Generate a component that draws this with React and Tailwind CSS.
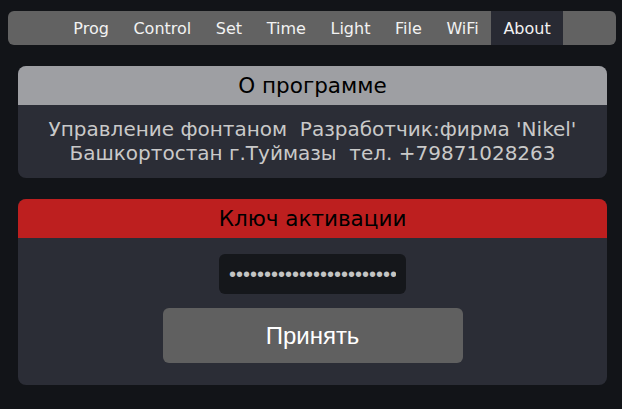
import React from 'react'

const tabs = ['Prog', 'Control', 'Set', 'Time', 'Light', 'File', 'WiFi', 'About']

const Card = ({ title, head, children }) => (
  <div className="rounded-lg overflow-hidden bg-[#2b2d36]">
    <div className={`${head} text-black text-center text-[21.5px] leading-[25px] py-[7px]`}>{title}</div>
    {children}
  </div>
)

const App = () => {
  return (
    <div className="min-h-[409px] bg-[#121418] pt-[11px] font-['DejaVu_Sans',sans-serif]">
      <nav className="ml-2 mr-[6px] h-[34px] rounded-md bg-[#626262] flex justify-center">
        {tabs.map((t) => (
          <a
            key={t}
            className={`px-[12.3px] pt-px flex items-center text-[16px] text-[#f2f2f2] ${t === 'About' ? 'bg-[#282a33]' : ''}`}
          >
            {t}
          </a>
        ))}
      </nav>

      <div className="pl-[18px] pr-[15px] pt-[21px] flex flex-col gap-[21px]">
        <Card title="О программе" head="bg-[#9e9fa3]">
          <div className="pt-3 pb-[13px] text-center text-[20px] leading-6 text-[#c9c9c9]">
            <p>Управление фонтаном&nbsp;&nbsp;Разработчик:фирма 'Nikel'</p>
            <p>Башкортостан г.Туймазы&nbsp;&nbsp;тел. +79871028263</p>
          </div>
        </Card>

        <Card title="Ключ активации" head="bg-[#bd1f1f]">
          <div className="flex flex-col items-center pt-4 pb-[22px]">
            <input
              type="password"
              readOnly
              defaultValue="ABCDEFGHIJKLMNOPQRSTUVWX"
              className="w-[187px] h-10 rounded-md bg-[#15171b] px-[10px] text-[20px] text-[#c4c4c4] font-['Liberation_Sans',sans-serif] outline-none"
            />
            <button className="mt-[14px] w-[300px] h-[55px] rounded-md bg-[#606060] text-white text-[24px] font-['Liberation_Sans',sans-serif]">
              Принять
            </button>
          </div>
        </Card>
      </div>
    </div>
  )
}

export default App
